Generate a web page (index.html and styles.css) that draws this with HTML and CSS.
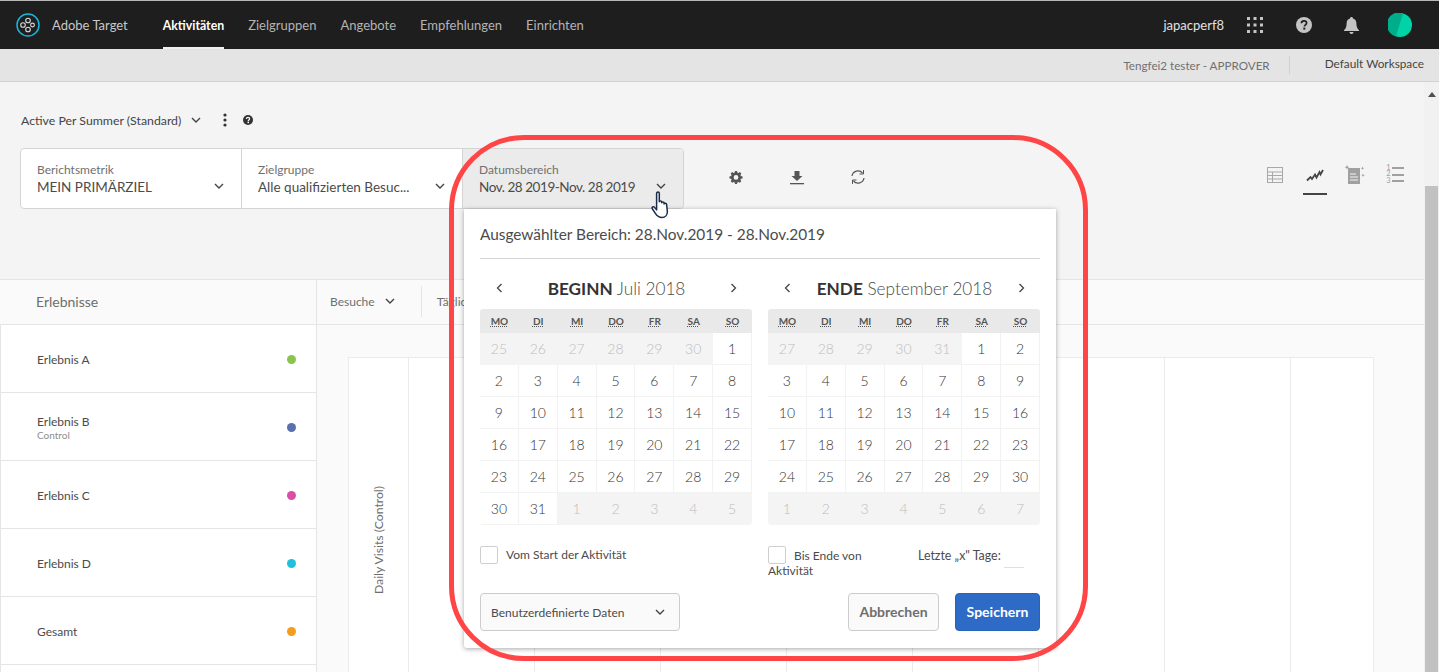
FILE: index.html
```html
<!DOCTYPE html>
<html lang="de">
<head>
  <meta charset="UTF-8" />
  <title>Adobe Target</title>
  <link rel="stylesheet" href="styles.css">
</head>
<body>
  <header class="topnav">
    <svg class="logo" width="24" height="24" viewBox="0 0 24 24" fill="none">
      <circle cx="12" cy="12" r="11" stroke="#1ab4d9" stroke-width="1.5"/>
      <g stroke="#d8d8d8" stroke-width="1.1">
        <circle cx="7" cy="12" r="2.3"/><circle cx="12" cy="7.5" r="2.3"/><circle cx="12" cy="16.5" r="2.3"/><circle cx="16.5" cy="12" r="1.9"/>
      </g>
    </svg>
    <span class="brand">Adobe Target</span>
    <nav class="mainmenu">
      <a class="menu-item active">Aktivitäten</a>
      <a class="menu-item">Zielgruppen</a>
      <a class="menu-item">Angebote</a>
      <a class="menu-item">Empfehlungen</a>
      <a class="menu-item">Einrichten</a>
    </nav>
    <div class="nav-right">
      <span class="username">japacperf8</span>
      <svg class="apps" width="16" height="16" viewBox="0 0 16 16" fill="#c4c4c4">
        <rect x="0" y="0" width="3" height="3"/><rect x="6.5" y="0" width="3" height="3"/><rect x="13" y="0" width="3" height="3"/>
        <rect x="0" y="6.5" width="3" height="3"/><rect x="6.5" y="6.5" width="3" height="3"/><rect x="13" y="6.5" width="3" height="3"/>
        <rect x="0" y="13" width="3" height="3"/><rect x="6.5" y="13" width="3" height="3"/><rect x="13" y="13" width="3" height="3"/>
      </svg>
      <svg class="help" width="16" height="16" viewBox="0 0 16 16">
        <circle cx="8" cy="8" r="8" fill="#c4c4c4"/>
        <path d="M5.4 6.2C5.5 4.6 6.6 3.8 8 3.8c1.5 0 2.6.9 2.6 2.2 0 1.9-2.2 1.9-2.2 3.6" fill="none" stroke="#1e1e1e" stroke-width="1.7"/>
        <rect x="7.3" y="10.6" width="2" height="2" fill="#1e1e1e"/>
      </svg>
      <svg class="bell" width="15" height="17" viewBox="0 0 15 17" fill="#c4c4c4">
        <path d="M7.5 0C8.4 0 9 .6 9 1.5 11.4 2.2 12.4 4 12.4 6.5c0 3.6.9 5 2.6 6.7V14H0v-.8C1.700 11.500 2.600 10.100 2.600 6.500 2.600 4 3.600 2.200 6 1.500 6 .6 6.600 0 7.500 0z"/>
        <path d="M5.500 15h4c0 1.200-.9 2-2 2s-2-.8-2-2z"/>
      </svg>
      <svg class="avatar" width="24" height="24" viewBox="0 0 24 24">
        <circle cx="12" cy="12" r="12" fill="#00d4a6"/>
        <path d="M15 .4A12 12 0 1 0 8 23.300z" fill="#00ad8b"/>
      </svg>
    </div>
  </header>

  <div class="subbar">
    <span class="role">Tengfei2 tester - APPROVER</span>
    <span class="workspace">Default Workspace</span>
  </div>

  <div class="page">
    <main class="content">
      <section class="top-panel">
        <div class="report-title">
          <span>Active Per Summer (Standard)</span>
          <svg class="chev title-chev" width="10" height="6" viewBox="0 0 10 6"><path d="M1 1l4 4 4-4"/></svg>
          <svg class="more" width="4" height="14" viewBox="0 0 4 14" fill="#333"><circle cx="2" cy="2" r="1.600"/><circle cx="2" cy="7" r="1.600"/><circle cx="2" cy="12" r="1.600"/></svg>
          <svg class="title-help" width="10" height="10" viewBox="0 0 16 16">
            <circle cx="8" cy="8" r="8" fill="#333"/>
            <path d="M5.400 6.200C5.500 4.600 6.600 3.800 8 3.800c1.500 0 2.600.9 2.600 2.200 0 1.900-2.200 1.900-2.200 3.600" fill="none" stroke="#fff" stroke-width="2"/>
            <rect x="7.200" y="10.600" width="2.400" height="2.400" fill="#fff"/>
          </svg>
        </div>

        <div class="filter-row">
          <div class="filters">
            <div class="filter">
              <span class="filter-label">Berichtsmetrik</span>
              <span class="filter-value">MEIN PRIMÄRZIEL</span>
              <svg class="chev filter-chev" width="10" height="6" viewBox="0 0 10 6"><path d="M1 1l4 4 4-4"/></svg>
            </div>
            <div class="filter">
              <span class="filter-label">Zielgruppe</span>
              <span class="filter-value">Alle qualifizierten Besuc...</span>
              <svg class="chev filter-chev" width="10" height="6" viewBox="0 0 10 6"><path d="M1 1l4 4 4-4"/></svg>
            </div>
            <div class="filter filter-date">
              <span class="filter-label">Datumsbereich</span>
              <span class="filter-value">Nov. 28 2019-Nov. 28 2019</span>
              <svg class="chev filter-chev" width="10" height="6" viewBox="0 0 10 6"><path d="M1 1l4 4 4-4"/></svg>

              <div class="date-popup">
                <h2 class="popup-title">Ausgewählter Bereich: 28.Nov.2019 - 28.Nov.2019</h2>
                <div class="calendars">
                  <div class="calendar">
                    <div class="cal-head">
                      <svg class="cal-arrow" width="7" height="10" viewBox="0 0 7 10"><path d="M5.500 1l-4 4 4 4"/></svg>
                      <span class="cal-title"><b>BEGINN</b> Juli 2018</span>
                      <svg class="cal-arrow" width="7" height="10" viewBox="0 0 7 10"><path d="M1.500 1l4 4-4 4"/></svg>
                    </div>
                    <div class="cal-grid">
                      <abbr>MO</abbr><abbr>DI</abbr><abbr>MI</abbr><abbr>DO</abbr><abbr>FR</abbr><abbr>SA</abbr><abbr>SO</abbr>
                      <span class="off">25</span><span class="off">26</span><span class="off">27</span><span class="off">28</span><span class="off">29</span><span class="off">30</span><span>1</span>
                      <span>2</span><span>3</span><span>4</span><span>5</span><span>6</span><span>7</span><span>8</span>
                      <span>9</span><span>10</span><span>11</span><span>12</span><span>13</span><span>14</span><span>15</span>
                      <span>16</span><span>17</span><span>18</span><span>19</span><span>20</span><span>21</span><span>22</span>
                      <span>23</span><span>24</span><span>25</span><span>26</span><span>27</span><span>28</span><span>29</span>
                      <span>30</span><span>31</span><span class="off">1</span><span class="off">2</span><span class="off">3</span><span class="off">4</span><span class="off">5</span>
                    </div>
                  </div>
                  <div class="calendar">
                    <div class="cal-head">
                      <svg class="cal-arrow" width="7" height="10" viewBox="0 0 7 10"><path d="M5.500 1l-4 4 4 4"/></svg>
                      <span class="cal-title"><b>ENDE</b> September 2018</span>
                      <svg class="cal-arrow" width="7" height="10" viewBox="0 0 7 10"><path d="M1.500 1l4 4-4 4"/></svg>
                    </div>
                    <div class="cal-grid">
                      <abbr>MO</abbr><abbr>DI</abbr><abbr>MI</abbr><abbr>DO</abbr><abbr>FR</abbr><abbr>SA</abbr><abbr>SO</abbr>
                      <span class="off">27</span><span class="off">28</span><span class="off">29</span><span class="off">30</span><span class="off">31</span><span>1</span><span>2</span>
                      <span>3</span><span>4</span><span>5</span><span>6</span><span>7</span><span>8</span><span>9</span>
                      <span>10</span><span>11</span><span>12</span><span>13</span><span>14</span><span>15</span><span>16</span>
                      <span>17</span><span>18</span><span>19</span><span>20</span><span>21</span><span>22</span><span>23</span>
                      <span>24</span><span>25</span><span>26</span><span>27</span><span>28</span><span>29</span><span>30</span>
                      <span class="off">1</span><span class="off">2</span><span class="off">3</span><span class="off">4</span><span class="off">5</span><span class="off">6</span><span class="off">7</span>
                    </div>
                  </div>
                </div>

                <div class="range-options">
                  <div class="range-col">
                    <span class="check"></span>
                    <span class="check-text">Vom Start der Aktivität</span>
                  </div>
                  <div class="range-col range-end">
                    <div class="until"><span class="check"></span><span class="check-text">Bis Ende von Aktivität</span></div>
                    <div class="last-days">Letzte „x" Tage:<span class="days-input"></span></div>
                  </div>
                </div>

                <div class="popup-footer">
                  <div class="preset">
                    <span>Benutzerdefinierte Daten</span>
                    <svg class="chev" width="10" height="6" viewBox="0 0 10 6"><path d="M1 1l4 4 4-4"/></svg>
                  </div>
                  <button class="btn btn-cancel">Abbrechen</button>
                  <button class="btn btn-save">Speichern</button>
                </div>
              </div>
            </div>
          </div>

          <div class="actions">
            <svg class="gear" width="14" height="14" viewBox="0 0 16 16" fill="#555">
              <path fill-rule="evenodd" d="M6.800 1h2.400l.4 1.900 1.200.5 1.600-1 1.700 1.700-1 1.600.5 1.200 1.900.4v2.400l-1.900.4-.5 1.200 1 1.600-1.700 1.700-1.600-1-1.200.5-.4 1.900H6.800l-.4-1.900-1.200-.5-1.600 1-1.700-1.700 1-1.600-.5-1.200L.5 9.700V7.300l1.900-.4.5-1.200-1-1.600 1.700-1.700 1.600 1 1.200-.5zM8 5.800a2.700 2.700 0 1 0 0 5.400 2.700 2.700 0 0 0 0-5.400z"/>
            </svg>
            <svg width="16" height="16" viewBox="0 0 16 16" fill="#555">
              <path d="M5.500 2h5v5h3L8 12 2.500 7h3z"/><rect x="1" y="14" width="14" height="1.300"/>
            </svg>
            <svg width="16" height="16" viewBox="0 0 16 16" fill="none" stroke="#555" stroke-width="1.200">
              <path d="M2 7a6 6 0 0 1 10.500-3"/><path d="M14 9a6 6 0 0 1-10.500 3"/>
              <path d="M13.500 1v4h-4" stroke-width="1"/><path d="M2.500 15v-4h4" stroke-width="1"/>
            </svg>
          </div>

          <div class="views">
            <div class="view">
              <svg width="16" height="16" viewBox="0 0 16 16" fill="none" stroke="#a8a8a8">
                <rect x=".5" y=".5" width="15" height="15"/><path d="M.5 5h15M.5 8.500h15M.5 12h15M5.500 5v10.500"/>
              </svg>
            </div>
            <div class="view view-on">
              <svg width="18" height="14" viewBox="0 0 18 14" fill="none" stroke="#444" stroke-width="1.800">
                <path d="M1 12.500L4.500 9 6 11 9 6.500 10.500 9.500 13.500 4 14.500 6.500 17 2"/>
              </svg>
            </div>
            <div class="view">
              <svg width="20" height="20" viewBox="0 0 20 20">
                <path d="M3 3h12v16H3z" fill="#a0a0a0"/>
                <path d="M5 9h6M5 12h8M5 15h8" stroke="#f4f4f4" stroke-width="1.100"/>
                <path d="M2 0l.7 1.600 1.600.7-1.600.7L2 4.600 1.300 3-.3 2.300l1.600-.7zM17.500 1.500l.5 1.200 1.200.5-1.200.5-.5 1.200-.5-1.200-1.200-.5 1.200-.5zM18 8.500l.5 1.200 1.200.5-1.200.5-.5 1.200-.5-1.200-1.200-.5 1.200-.5z" fill="#a0a0a0"/>
              </svg>
            </div>
            <div class="view view-list">
              <span class="list-nums">1<br>2<br>3</span>
              <span class="list-lines"><i></i><i></i><i></i></span>
            </div>
          </div>
        </div>
      </section>

      <section class="report">
        <div class="report-bar">
          <div class="bar-left">Erlebnisse</div>
          <div class="bar-right">
            <span class="metric">Besuche</span>
            <svg class="chev metric-chev" width="10" height="6" viewBox="0 0 10 6"><path d="M1 1l4 4 4-4"/></svg>
            <span class="bar-sep"></span>
            <span class="metric">Täglich</span>
          </div>
        </div>
        <div class="report-body">
          <ul class="experiences">
            <li class="exp"><span class="exp-name">Erlebnis A</span><i class="dot dot-a"></i></li>
            <li class="exp"><span class="exp-name">Erlebnis B<small>Control</small></span><i class="dot dot-b"></i></li>
            <li class="exp"><span class="exp-name">Erlebnis C</span><i class="dot dot-c"></i></li>
            <li class="exp"><span class="exp-name">Erlebnis D</span><i class="dot dot-d"></i></li>
            <li class="exp"><span class="exp-name">Gesamt</span><i class="dot dot-e"></i></li>
          </ul>
          <div class="chart-wrap">
            <div class="chart">
              <div class="chart-axis"><span>Daily Visits (Control)</span></div>
              <div></div><div></div><div></div><div></div><div></div><div></div><div></div><div></div>
            </div>
          </div>
        </div>
      </section>
    </main>
    <div class="scrollbar">
      <span class="scroll-up"></span>
      <span class="scroll-thumb"></span>
    </div>
  </div>

  <!-- annotation + mouse pointer from the original capture -->
  <div class="annotation"></div>
  <svg class="pointer" width="22" height="28" viewBox="0 0 20 26">
    <path d="M5 2c0-1.500 2.500-1.500 2.500 0v8c0-1 2.200-1 2.200 0v1c0-1 2.200-1 2.200 0v1c0-1 2.300-1 2.300 .2l.8 7c0 3-2 5.300-5 5.300-3.500 0-4.800-1.500-6-3.500L1 16.500c-.8-1.500 1-2.500 2-1.300l2 2.300z" fill="#fff" stroke="#1c2c4c" stroke-width="1.400" stroke-linejoin="round"/>
  </svg>
</body>
</html>
```

FILE: styles.css
```css
* {
  box-sizing: border-box;
}
html, body {
  height: 100%;
}
body {
  margin: 0;
  height: 672px;
  overflow: hidden;
  position: relative;
  font-family: "Lato", "Open Sans", sans-serif;
  font-size: 13px;
  color: #4b4b4b;
  background: #f4f4f4;
}

/* top navigation */
.topnav {
  display: flex;
  align-items: center;
  height: 49px;
  padding-left: 16px;
  padding-right: 27px;
  background: #1e1e1e;
  border-top: 1px solid #b8b8b8;
}
.brand {
  margin-left: 12px;
  color: #c8c8c8;
  font-size: 13px;
}
.mainmenu {
  display: flex;
  height: 100%;
  gap: 24px;
  margin-left: 35px;
}
.menu-item {
  display: flex;
  align-items: center;
  height: 100%;
  padding-top: 2px;
  color: #b4b4b4;
  font-size: 13px;
  border-bottom: 2px solid transparent;
}
.menu-item.active {
  color: #fff;
  font-size: 12.300px;
  font-weight: 700;
  border-bottom-color: #f0f0f0;
}
.nav-right {
  display: flex;
  align-items: center;
  margin-left: auto;
}
.username {
  color: #e2e2e2;
  font-size: 13px;
}
.apps { margin-left: 23px; }
.help { margin-left: 33px; }
.bell { margin-left: 32px; }
.avatar { margin-left: 29px; }

.subbar {
  display: flex;
  align-items: center;
  justify-content: flex-end;
  height: 33px;
  padding-right: 15px;
  background: #e4e4e4;
  border-bottom: 1px solid #d2d2d2;
}
.role {
  padding-right: 19px;
  margin-right: 35px;
  padding-top: 2px;
  color: #707070;
  font-size: 11.650px;
  border-right: 1px solid #d0d0d0;
  line-height: 16px;
}
.workspace {
  margin-top: -3px;
  font-size: 11.800px;
  color: #444;
}

.page {
  display: flex;
  height: 590px;
  overflow: hidden;
}
.content {
  flex: 1;
  min-width: 0;
}

.scrollbar {
  width: 15px;
  padding: 0 1px;
  background: #f1f1f1;
}
.scroll-up {
  display: block;
  width: 0;
  margin: 10px auto 0;
  border: 4px solid transparent;
  border-top: 0;
  border-bottom: 5px solid #505050;
}
.scroll-thumb {
  display: block;
  height: 486px;
  margin-top: 89px;
  background: #c1c1c1;
}

/* report head */
.top-panel {
  height: 198px;
  padding: 29px 0 0 20px;
  border-bottom: 1px solid #e5e5e5;
}
.report-title {
  display: flex;
  align-items: center;
  height: 18px;
  margin-left: 1px;
  font-size: 12.300px;
  color: #444;
}
.title-chev { margin-left: 10px; }
.more { margin-left: 22px; }
.title-help { margin-left: 16px; }

.chev {
  fill: none;
  stroke: #444;
  stroke-width: 1.400;
}

.filter-row {
  display: flex;
  align-items: center;
  margin-top: 19px;
}
.filters {
  display: flex;
  width: 664px;
  height: 61px;
  background: #fff;
  border: 1px solid #d4d4d4;
  border-radius: 4px;
}
.filter {
  position: relative;
  display: flex;
  flex-direction: column;
  width: 221px;
  padding: 13px 0 0 16px;
  border-right: 1px solid #d4d4d4;
}
.filter-label {
  font-size: 12px;
  line-height: 16px;
  color: #707070;
}
.filter-value {
  font-size: 13.500px;
  line-height: 18px;
  color: #4b4b4b;
}
.filter-chev {
  position: absolute;
  top: 34px;
  right: 17px;
}
.filter-date {
  flex: 1;
  border-right: 0;
  background: #ebebeb;
  border-radius: 0 4px 4px 0;
}
.filter-date .filter-value {
  letter-spacing: -.45px;
}

.actions {
  display: flex;
  align-items: center;
  gap: 45px;
  margin-left: 44px;
  margin-top: -3px;
}
.gear {
  margin: 0 1px;
}
.views {
  display: flex;
  gap: 16px;
  margin-left: auto;
  padding-right: 17px;
}
.view {
  display: flex;
  align-items: center;
  justify-content: center;
  width: 24px;
  height: 32px;
  padding-bottom: 6px;
  border-bottom: 2px solid transparent;
}
.view-on {
  border-bottom-color: #444;
}
.view-list {
  gap: 1px;
  color: #a0a0a0;
}
.list-nums {
  font-size: 7.500px;
  line-height: 6.500px;
}
.list-lines {
  display: flex;
  flex-direction: column;
  gap: 4.500px;
}
.list-lines i {
  display: block;
  width: 12px;
  height: 2px;
  background: #a0a0a0;
}

/* date popup */
.date-popup {
  position: absolute;
  top: 60px;
  left: 1px;
  z-index: 5;
  width: 592px;
  height: 439px;
  padding: 0 16px;
  background: #fff;
  border-radius: 0 0 3px 3px;
  box-shadow: 0 1px 5px rgba(0, 0, 0, .35);
}
.popup-title {
  margin: 0;
  height: 50px;
  padding-top: 15px;
  font-size: 15.400px;
  font-weight: 400;
  line-height: 21px;
  color: #4b4b4b;
  border-bottom: 1px solid #d4d4d4;
}
.calendars {
  display: flex;
  gap: 16px;
}
.calendar {
  width: 272px;
}
.cal-head {
  display: flex;
  align-items: center;
  justify-content: space-between;
  height: 50px;
  padding: 8px 15px 0 16px;
}
.cal-arrow {
  fill: none;
  stroke: #444;
  stroke-width: 1.300;
}
.cal-title {
  font-size: 17.200px;
  font-weight: 300;
  color: #4b4b4b;
}
.cal-title b {
  font-weight: 700;
  color: #333;
}
.cal-grid {
  display: grid;
  grid-template-columns: repeat(7, 1fr);
  grid-template-rows: 24px repeat(6, 32px);
  border-radius: 3px;
  overflow: hidden;
}
.cal-grid abbr {
  display: flex;
  align-items: center;
  justify-content: center;
  background: #e9e9e9;
  font-size: 10px;
  font-weight: 700;
  color: #555;
  text-decoration: underline dotted;
}
.cal-grid span {
  display: flex;
  align-items: center;
  justify-content: center;
  font-size: 14px;
  font-weight: 300;
  color: #333;
  background: #fff;
  border-right: 1px solid #f2f2f2;
  border-bottom: 1px solid #f2f2f2;
  opacity: .99;
}
.cal-grid span.off {
  color: #bdbdbd;
  background: #f4f4f4;
  border-color: #f4f4f4;
}

.range-options {
  display: flex;
  gap: 16px;
  height: 68px;
  padding-top: 21px;
  font-size: 12px;
  color: #4b4b4b;
}
.range-col {
  display: flex;
  width: 272px;
}
.range-end {
  justify-content: space-between;
}
.check {
  display: inline-block;
  flex: none;
  width: 18px;
  height: 18px;
  background: #fff;
  border: 1px solid #cfcfcf;
  border-radius: 2px;
}
.check-text {
  margin-left: 8px;
  line-height: 18px;
}
.until {
  width: 110px;
  padding-top: 1.500px;
}
.until .check {
  float: left;
  margin: -1.500px 0 -4px;
}
.until .check-text {
  line-height: 15px;
}
.last-days {
  display: flex;
  width: 122px;
  padding-top: 1px;
  font-size: 12.400px;
  line-height: 18px;
}
.days-input {
  width: 20px;
  height: 21px;
  margin-left: 3px;
  border-bottom: 1px solid #e0e0e0;
}

.popup-footer {
  display: flex;
  align-items: center;
}
.preset {
  display: flex;
  align-items: center;
  justify-content: space-between;
  width: 200px;
  height: 38px;
  padding: 0 14px 0 10px;
  font-size: 12px;
  background: #fafafa;
  border: 1px solid #ccc;
  border-radius: 4px;
}
.btn {
  height: 38px;
  padding: 0 0 2px;
  font-family: inherit;
  font-size: 14px;
  font-weight: 700;
  border-radius: 4px;
}
.btn-cancel {
  width: 91px;
  margin-left: auto;
  color: #6e6e6e;
  background: #fafafa;
  border: 1px solid #ccc;
}
.btn-save {
  width: 85px;
  margin-left: 16px;
  color: #fff;
  background: #2d6bc6;
  border: 1px solid #2a62b5;
}

/* report table and chart */
.report-bar {
  display: flex;
  height: 45px;
  padding-bottom: 2px;
  background: #fafafa;
  border-bottom: 1px solid #e5e5e5;
}
.bar-left {
  display: flex;
  align-items: center;
  width: 317px;
  padding-left: 36px;
  font-size: 14px;
  color: #6e6e6e;
  margin-bottom: -2px;
  padding-bottom: 2px;
  border-right: 1px solid #e5e5e5;
}
.bar-right {
  display: flex;
  align-items: center;
  padding-left: 13px;
}
.metric {
  font-size: 12px;
  color: #6e6e6e;
}
.metric-chev { margin-left: 10px; }
.bar-sep {
  width: 1px;
  height: 31px;
  margin: 0 15px 0 26px;
  background: #e5e5e5;
}
.report-body {
  display: flex;
  height: 347px;
  overflow: hidden;
}
.experiences {
  width: 317px;
  margin: 0;
  padding: 0;
  list-style: none;
  background: #fff;
  border-left: 1px solid #e5e5e5;
  border-right: 1px solid #e5e5e5;
}
.exp {
  display: flex;
  align-items: center;
  justify-content: space-between;
  height: 68px;
  padding: 2px 20px 0 36px;
  border-bottom: 1px solid #e5e5e5;
}
.exp-name {
  font-size: 12px;
  color: #4b4b4b;
}
.exp-name small {
  display: block;
  font-size: 10px;
  color: #8e8e8e;
}
.dot {
  flex: none;
  width: 9.500px;
  height: 9.500px;
  border-radius: 50%;
}
.dot-a { background: #8bc34f; }
.dot-b { background: #5a6fad; }
.dot-c { background: #d84fa6; }
.dot-d { background: #1fc0dc; }
.dot-e { background: #f49c1c; }

.chart-wrap {
  flex: 1;
  padding: 32px 50px 0 31px;
  background: #fafafa;
}
.chart {
  display: grid;
  grid-template-columns: 60px repeat(7, 126px) 1fr;
  height: 366px;
  background: #fff;
  border: 1px solid #ebebeb;
}
.chart > div {
  border-right: 1px solid #ebebeb;
}
.chart > div:last-child {
  border-right: 0;
}
.chart-axis {
  display: flex;
  align-items: center;
  justify-content: center;
}
.chart-axis span {
  writing-mode: vertical-rl;
  transform: rotate(180deg);
  font-size: 12.200px;
  color: #6e6e6e;
}

/* overlays */
.annotation {
  position: absolute;
  top: 135px;
  left: 449px;
  z-index: 8;
  width: 639px;
  height: 526px;
  border: 5px solid #ff4545;
  border-radius: 75px;
  pointer-events: none;
}
.pointer {
  position: absolute;
  top: 191px;
  left: 651px;
  z-index: 9;
}
```
